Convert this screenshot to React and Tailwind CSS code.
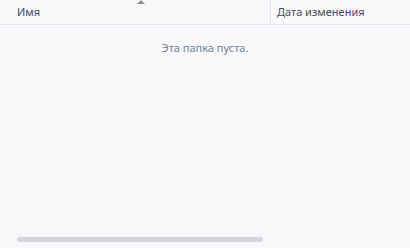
export default function App() {
  return (
    <div className="w-[410px] h-[248px] bg-[#f8f8fb] flex flex-col overflow-hidden" style={{ fontFamily: '"Noto Sans", "Open Sans", sans-serif' }}>
      <div className="relative h-[25px] flex border-b border-[#e4e4ec] shrink-0">
        <div className="w-[271px] pl-[17px] pt-[1px] flex items-center text-[11px] text-[#4a4860] border-r border-[#e4e4ec]">
          Имя
        </div>
        <div className="flex-1 pl-[6px] pt-[1px] flex items-center text-[11px] text-[#4a4860]">
          Дата изменения
        </div>
        <div className="absolute left-[137px] top-0 w-0 h-0 border-l-[4px] border-r-[4px] border-b-[4px] border-l-transparent border-r-transparent border-b-[#8c8c96]" />
      </div>
      <div className="flex-1 flex flex-col">
        <div className="mt-[15px] text-center text-[11px] text-[#6f8192]">Эта папка пуста.</div>
        <div className="flex-1" />
        <div className="mb-[6px] ml-[17px] w-[246px] h-[5px] rounded-full bg-[#d3d6dc]" />
      </div>
    </div>
  );
}
